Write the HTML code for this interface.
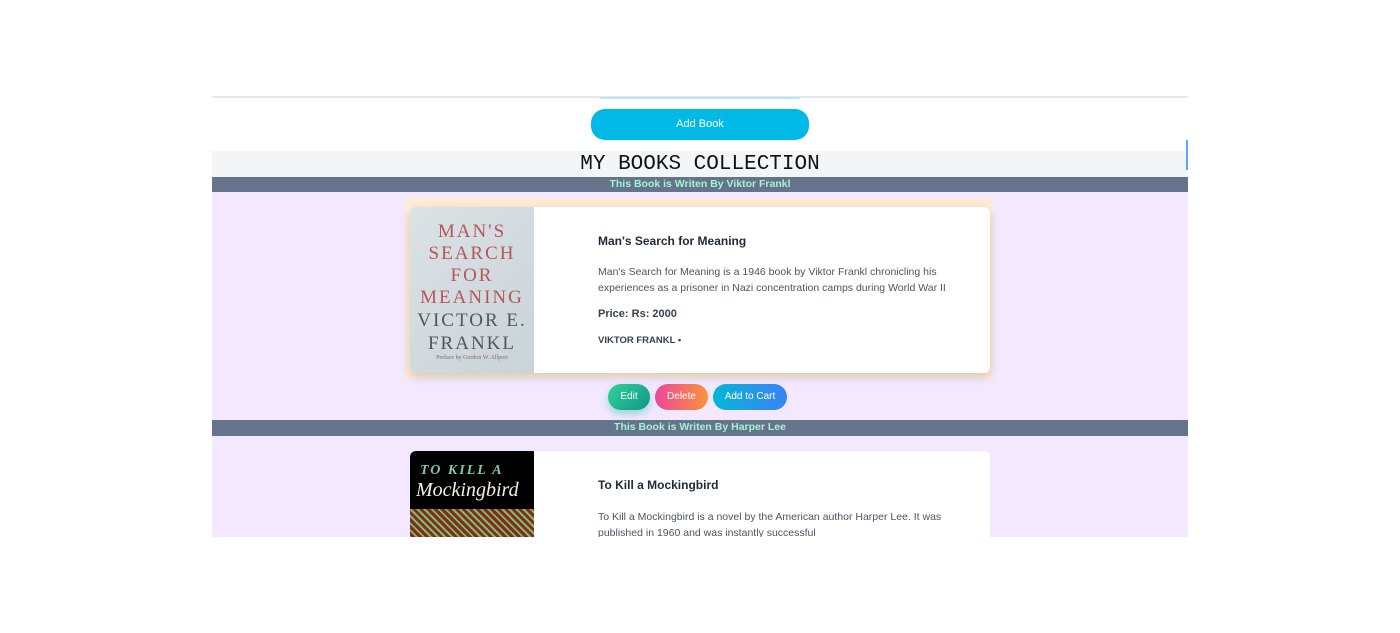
<!DOCTYPE html>
<html><head><meta charset="utf-8"><style>
*{margin:0;padding:0;box-sizing:border-box}
body{width:1400px;height:633px;background:#fff;position:relative;overflow:hidden;font-family:"Liberation Sans",sans-serif}
.a{position:absolute}
.band{left:212px;width:976px;height:16px;background:#64748b;color:#a7f3d0;font-size:10.5px;font-weight:bold;text-align:center;line-height:15px}
.t1{font-size:12px;font-weight:bold;color:#1f2937}
.p{font-size:10.5px;color:#4b5563;line-height:16px}
.btn{top:384px;height:26px;border-radius:13px;color:#fff;font-size:10px;text-align:center;line-height:26px}
</style></head><body>
<div class="a" style="left:212px;top:96px;width:976px;height:2px;background:#e5e7eb"></div>
<div class="a" style="left:600px;top:97px;width:200px;height:2px;background:#bae6fd"></div>
<div class="a" style="left:591px;top:109px;width:218px;height:31px;border-radius:14px;background:#00b9e6;color:#fff;font-size:11px;text-align:center;line-height:31px">Add Book</div>
<div class="a" style="left:212px;top:151px;width:976px;height:26px;background:#f4f5f7;text-align:center;font-family:'Liberation Mono',monospace;font-size:21px;line-height:27px;color:#111">MY BOOKS COLLECTION</div>
<div class="a" style="left:1186px;top:140px;width:2px;height:30px;background:#60a5fa"></div>
<div class="a band" style="top:177px">This Book is Writen By Viktor Frankl</div>
<div class="a" style="left:212px;top:192px;width:976px;height:228px;background:#f3e8ff"></div>
<div class="a" style="left:405px;top:198px;width:588px;height:180px;background:#fdebd5"></div>
<div class="a" style="left:410px;top:207px;width:580px;height:166px;background:#fff;border-radius:6px;box-shadow:0 4px 10px rgba(0,0,0,.15);overflow:hidden">
 <div class="a" style="left:0;top:0;width:124px;height:166px;background:linear-gradient(135deg,#dbe2e6,#c9d3d8);text-align:center;font-family:'Liberation Serif',serif;letter-spacing:2px;padding-top:14px">
  <div style="color:#b5575a;font-size:19px;line-height:22px">MAN'S<br>SEARCH<br>FOR<br>MEANING</div>
  <div style="color:#555;font-size:19px;line-height:23px">VICTOR E.<br>FRANKL</div>
  <div style="color:#8a6a5a;font-size:6px;letter-spacing:0">Preface by Gordon W. Allport</div>
 </div>
 <div class="a t1" style="left:188px;top:27px">Man's Search for Meaning</div>
 <div class="a p" style="left:188px;top:57px;width:370px">Man's Search for Meaning is a 1946 book by Viktor Frankl chronicling his experiences as a prisoner in Nazi concentration camps during World War II</div>
 <div class="a" style="left:188px;top:101px;font-size:11px;font-weight:bold;color:#374151">Price: Rs: 2000</div>
 <div class="a" style="left:188px;top:128px;font-size:9.5px;font-weight:bold;color:#374151">VIKTOR FRANKL •</div>
</div>
<div class="a btn" style="left:608px;width:42px;background:linear-gradient(135deg,#34d399,#0d9488);box-shadow:0 4px 8px rgba(20,184,166,.4)">Edit</div>
<div class="a btn" style="left:655px;width:53px;background:linear-gradient(90deg,#ec4899,#fb923c)">Delete</div>
<div class="a btn" style="left:713px;width:74px;background:linear-gradient(90deg,#06b6d4,#3b82f6)">Add to Cart</div>
<div class="a band" style="top:420px">This Book is Writen By Harper Lee</div>
<div class="a" style="left:212px;top:436px;width:976px;height:101px;background:#f3e8ff;overflow:hidden">
 <div class="a" style="left:198px;top:15px;width:580px;height:120px;background:#fff;border-radius:6px;overflow:hidden">
  <div class="a" style="left:0;top:0;width:124px;height:120px;background:#000">
   <div class="a" style="left:10px;top:12px;color:#7fc9a8;font-size:14px;font-style:italic;font-weight:bold;letter-spacing:2px;font-family:'Liberation Serif',serif">TO KILL A</div>
   <div class="a" style="left:6px;top:28px;color:#f5f0e0;font-size:20px;font-style:italic;font-family:'Liberation Serif',serif">Mockingbird</div>
   <div class="a" style="left:0;top:58px;width:124px;height:62px;background:repeating-linear-gradient(45deg,#8b2a10 0 3px,#6fbf7f 3px 5px)"></div>
  </div>
  <div class="a t1" style="left:188px;top:27px">To Kill a Mockingbird</div>
  <div class="a p" style="left:188px;top:58px;width:370px">To Kill a Mockingbird is a novel by the American author Harper Lee. It was published in 1960 and was instantly successful</div>
 </div>
</div>
</body></html>
